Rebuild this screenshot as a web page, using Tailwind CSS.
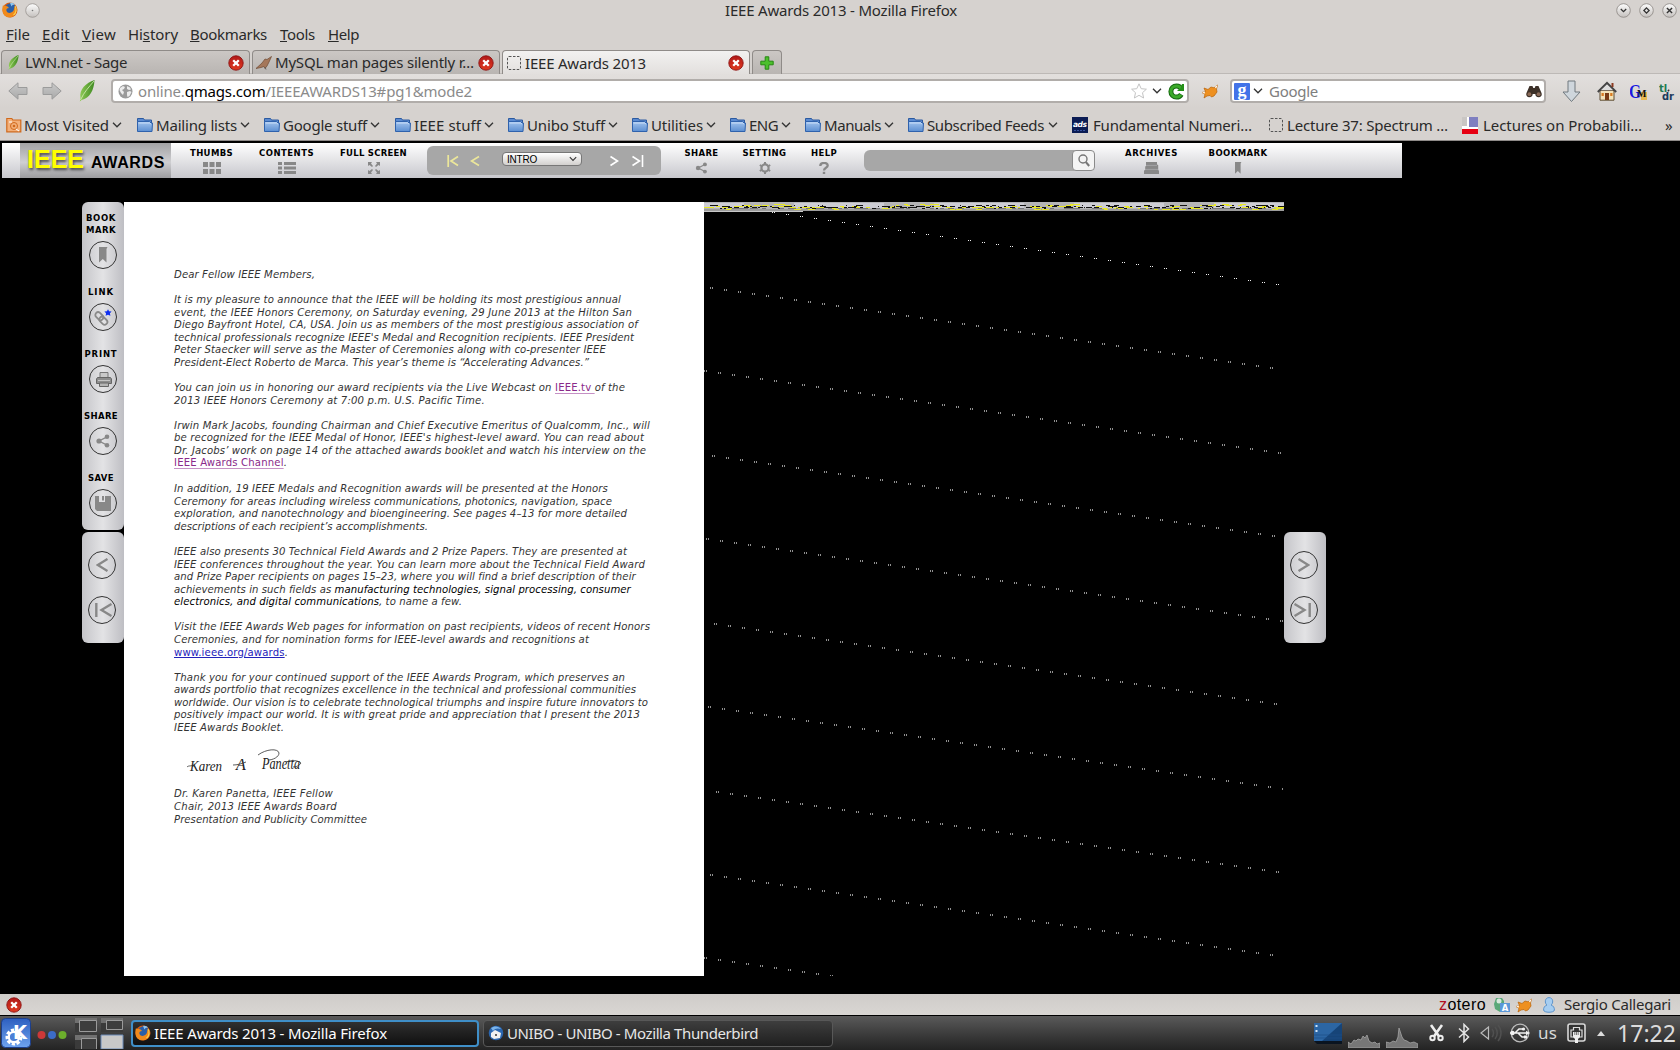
<!DOCTYPE html>
<html lang="en">
<head>
  <meta charset="UTF-8" />
  <meta name="viewport" content="width=device-width, initial-scale=1.0" />
  <title>IEEE Awards 2013 - Mozilla Firefox</title>
  <script src="https://cdn.jsdelivr.net/npm/@tailwindcss/browser@4"></script>
</head>
<body class="w-[1680px] h-[1050px] overflow-hidden flex flex-col bg-[#d6d2cf] text-[#2a2a2a] text-[15px] font-['Noto_Sans',sans-serif] whitespace-nowrap">

  <!-- Shared icons -->
  <svg class="absolute w-0 h-0">
    <defs>
      <linearGradient id="gFolder" x1="0" y1="0" x2="0" y2="1"><stop offset="0" stop-color="#a3c4ee" /><stop offset="1" stop-color="#5c8fd2" /></linearGradient>
      <linearGradient id="gBtn" x1="0" y1="0" x2="0" y2="1"><stop offset="0" stop-color="#fdfdfd" /><stop offset="1" stop-color="#c4c0bd" /></linearGradient>
      <linearGradient id="gRed" x1="0" y1="0" x2="0" y2="1"><stop offset="0" stop-color="#b01818" /><stop offset="1" stop-color="#e03a20" /></linearGradient>
      <linearGradient id="gArrow" x1="0" y1="0" x2="0" y2="1"><stop offset="0" stop-color="#c9c9c9" /><stop offset="1" stop-color="#a9a9a9" /></linearGradient>
      <linearGradient id="gLeaf" x1="0" y1="0" x2="1" y2="0"><stop offset="0" stop-color="#8fca55" /><stop offset="1" stop-color="#3f8a22" /></linearGradient>
      <linearGradient id="gKde" x1="0" y1="0" x2="0" y2="1"><stop offset="0" stop-color="#2d5fc0" /><stop offset="1" stop-color="#6fa4ee" /></linearGradient>
    </defs>
    <symbol id="folder" viewBox="0 0 16 16">
      <path d="M.5 1.500h6l1 1.500h7v3h-14z" fill="#5a8ad0" stroke="#2c5aa0" />
      <path d="M.5 14.500V4.500h12l1.500 1.500h1.500l-.5 8.500z" fill="url(#gFolder)" stroke="#2f62ad" />
      <path d="M1.500 6h11l1.500 1" fill="none" stroke="#d4e4fa" stroke-width=".8" />
    </symbol>
    <symbol id="chev" viewBox="0 0 10 6"><path d="M1 .8l4 4 4-4" fill="none" stroke="#333" stroke-width="1.300" /></symbol>
    <symbol id="close" viewBox="0 0 16 16">
      <circle cx="8" cy="8" r="7.200" fill="url(#gRed)" stroke="#8c1212" stroke-width=".9" />
      <path d="M5.200 5.200l5.600 5.600M10.800 5.200l-5.600 5.600" stroke="#fff" stroke-width="2.300" />
    </symbol>
    <symbol id="leaf" viewBox="0 0 16 22">
      <path d="M15.500 0C7 3 0 9 1.500 18L.8 21.500 2.500 20C11 18 15 10 15.500 0z" fill="url(#gLeaf)" />
      <path d="M15 1C10 7 5 12 1.500 20" stroke="#d9f0bd" stroke-width=".8" fill="none" />
    </symbol>
    <symbol id="firefox" viewBox="0 0 16 16">
      <circle cx="8" cy="8" r="7.500" fill="#d95d10" />
      <circle cx="8.500" cy="6.500" r="5.300" fill="#2a5fa8" />
      <path d="M8 1c2-.6 4 .2 5 1.500-2 0-3 .8-3.500 2z" fill="#8cc4ee" />
      <path d="M1 3c.5 1 1.200 1.300 2.500 1C5 3.800 6 4.500 7 6c-2 0-3 1-2.500 3 .7 2.200 4 2.500 6 .8 1.400-1.200 2-3 1.500-5.300 2.500 2 3 5.500 1 8.300-2.400 3-7.500 3.500-10.500.7C.3 11.200-.2 7 1 3z" fill="#f08a1c" />
      <path d="M13 4c2 3 1.300 7-1.500 9" fill="none" stroke="#fbd04a" stroke-width="1.200" />
    </symbol>
    <symbol id="blank" viewBox="0 0 16 16"><rect x="1.500" y="1.500" width="13" height="13" rx="1.500" fill="none" stroke="#555" stroke-dasharray="2.500 1.500" /></symbol>
    <symbol id="fox" viewBox="0 0 16 16">
      <path d="M15.500 2l-1 4 .5 3-3 4-2.500 1-1.500-1.500-3 .5-3 2 1-3.500L0 9.500l3.500-.8L2 5l4 1.500L9 4l3 .8z" fill="#ee9020" stroke="#b86208" stroke-width=".7" />
      <path d="M0 9.500l3-.8-.5 2zM15.500 2l-2.800 2 1.500 1.500z" fill="#fff" />
    </symbol>
    <symbol id="share" viewBox="0 0 14 14">
      <circle cx="3" cy="7" r="2.600" fill="#888" /><circle cx="11" cy="2.800" r="2.300" fill="#888" /><circle cx="11" cy="11.200" r="2.300" fill="#888" />
      <path d="M11 2.800L3 7l8 4.200" fill="none" stroke="#888" stroke-width="1.300" />
    </symbol>
    <symbol id="ribbon" viewBox="0 0 10 16"><path d="M1 0h8.500l-1 2v13.500L4.800 12 1 15.500z" fill="#888" /></symbol>
  </svg>

  <!-- Title bar -->
  <header class="h-5 flex items-center shrink-0">
    <svg class="w-4 h-4 ml-[2px]"><use href="#firefox" /></svg>
    <svg class="w-[15px] h-[15px] ml-[7px]" viewBox="0 0 15 15"><circle cx="7.500" cy="7.500" r="6.800" fill="url(#gBtn)" stroke="#98938f" stroke-width=".8" /><circle cx="7.500" cy="7.500" r=".8" fill="#777" /></svg>
    <span class="ml-[685px]" data-w="232">IEEE Awards 2013 - Mozilla Firefox</span>
    <div class="ml-auto mr-[3px] flex gap-[8px]">
      <svg class="w-[15px] h-[15px]" viewBox="0 0 15 15"><circle cx="7.500" cy="7.500" r="6.800" fill="url(#gBtn)" stroke="#8a8581" stroke-width=".8" /><path d="M4.800 6l2.700 2.700L10.200 6" fill="none" stroke="#333" stroke-width="1.300" /></svg>
      <svg class="w-[15px] h-[15px]" viewBox="0 0 15 15"><circle cx="7.500" cy="7.500" r="6.800" fill="url(#gBtn)" stroke="#8a8581" stroke-width=".8" /><path d="M7.500 4.900L10.100 7.500 7.500 10.100 4.900 7.500z" fill="none" stroke="#333" stroke-width="1.300" /></svg>
      <svg class="w-[15px] h-[15px]" viewBox="0 0 15 15"><circle cx="7.500" cy="7.500" r="6.800" fill="url(#gBtn)" stroke="#8a8581" stroke-width=".8" /><path d="M4.900 4.900l5.200 5.200M10.100 4.900l-5.200 5.200" stroke="#333" stroke-width="1.400" /></svg>
    </div>
  </header>

  <!-- Menu bar -->
  <nav class="h-7 pl-[6px] flex items-center shrink-0">
    <div class="w-9"><span data-w="24"><u>F</u>ile</span></div>
    <div class="w-10"><span data-w="28"><u>E</u>dit</span></div>
    <div class="w-[46px]"><span data-w="34"><u>V</u>iew</span></div>
    <div class="w-[62px]"><span data-w="50">Hi<u>s</u>tory</span></div>
    <div class="w-[90px]"><span data-w="77"><u>B</u>ookmarks</span></div>
    <div class="w-12"><span data-w="35"><u>T</u>ools</span></div>
    <div><span data-w="31"><u>H</u>elp</span></div>
  </nav>

  <!-- Tabs -->
  <div class="h-[26px] pt-[2px] pl-px flex gap-[2px] shrink-0 border-b border-[#bdb9b6]">
    <div class="w-[249px] h-6 flex items-center rounded-t border border-b-0 border-[#8f8b88] bg-linear-to-b from-[#cbc7c4] to-[#b9b5b2]">
      <svg class="w-[13px] h-[15px] ml-[5px]"><use href="#leaf" /></svg>
      <span class="ml-[5px]" data-w="102">LWN.net - Sage</span>
      <svg class="w-4 h-4 ml-auto mr-[5px]"><use href="#close" /></svg>
    </div>
    <div class="w-[248px] h-6 flex items-center rounded-t border border-b-0 border-[#8f8b88] bg-linear-to-b from-[#cbc7c4] to-[#b9b5b2]">
      <svg class="w-4 h-4 ml-[3px]" viewBox="0 0 16 16"><path d="M0 13.500L6 8l3-4 2 .5 4.500-3L13 7l-2 4-2 2.500-1-2-3 1z" fill="#a5775a" stroke="#6e4a34" stroke-width=".7" /><path d="M9 12l1 2.500" stroke="#555" stroke-width=".8" /></svg>
      <span class="ml-[3px]" data-w="199">MySQL man pages silently r…</span>
      <svg class="w-4 h-4 ml-auto mr-[5px]"><use href="#close" /></svg>
    </div>
    <div class="w-[248px] h-[25px] flex items-center rounded-t border border-b-0 border-[#8f8b88] bg-linear-to-b from-[#f2f1f0] to-[#e2dfdd]">
      <svg class="w-4 h-4 ml-[3px]"><use href="#blank" /></svg>
      <span class="ml-[3px]" data-w="121">IEEE Awards 2013</span>
      <svg class="w-4 h-4 ml-auto mr-[5px]"><use href="#close" /></svg>
    </div>
    <div class="w-[30px] h-6 flex items-center justify-center rounded-t border border-b-0 border-[#8f8b88] bg-linear-to-b from-[#cbc7c4] to-[#b9b5b2]">
      <svg class="w-[14px] h-[14px]" viewBox="0 0 14 14"><path d="M5.200.8h3.600v4.400h4.400v3.600H8.800v4.400H5.200V8.800H.8V5.200h4.400z" fill="#4cc02c" stroke="#268812" /></svg>
    </div>
  </div>

  <!-- Navigation toolbar -->
  <div class="h-[34px] flex items-center shrink-0 bg-linear-to-b from-[#e2dfdd] to-[#d6d2cf]">
    <svg class="w-5 h-[18px] ml-2" viewBox="0 0 20 18"><path d="M.8 9L10 .8v4.700h9v7h-9v4.700z" fill="url(#gArrow)" stroke="#9b9b9b" /></svg>
    <svg class="w-5 h-[18px] ml-[14px]" viewBox="0 0 20 18"><path d="M19.200 9L10 .8v4.700H1v7h9v4.700z" fill="url(#gArrow)" stroke="#9b9b9b" /></svg>
    <svg class="w-4 h-[22px] ml-[17px]"><use href="#leaf" /></svg>
    <div class="w-[1078px] h-6 ml-4 pl-[5px] flex items-center bg-white border-2 border-[#b1adaa] rounded">
      <svg class="w-[15px] h-[15px]" viewBox="0 0 15 15"><circle cx="7.500" cy="7.500" r="7" fill="#9a9a9a" /><path d="M2 4l3-2 2 1-1 2-2 1 2 2-1 3-2-2-1.500-3zM9 2l3 1.500 1 2-2 .5-2-1zM9 8l3-1 1.500 1-2 4-2 1-.5-2z" fill="#ececec" /></svg>
      <span class="ml-[5px] text-[#8b8b8b]" data-w="334">online.<span class="text-black">qmags.com</span>/IEEEAWARDS13#pg1&amp;mode2</span>
      <svg class="w-4 h-4 ml-auto" viewBox="0 0 16 16"><path d="M8 .8l2.200 4.900 5.200.5-3.900 3.500 1.100 5.300L8 12.300 3.400 15l1.100-5.300L.6 6.200l5.200-.5z" fill="#fff" stroke="#c4c4c4" /></svg>
      <svg class="w-[10px] h-[6px] ml-[5px]"><use href="#chev" /></svg>
      <svg class="w-[17px] h-[17px] ml-[6px] mr-[2px]" viewBox="0 0 17 17"><circle cx="8.500" cy="8.500" r="5.600" fill="none" stroke="#176b12" stroke-width="5" stroke-dasharray="29 7" stroke-dashoffset="-3" /><circle cx="8.500" cy="8.500" r="5.600" fill="none" stroke="#3aaa28" stroke-width="3" stroke-dasharray="28 7.200" stroke-dashoffset="-3.500" /><path d="M9.500 8V7l3-1.500L14 1h2v7z" fill="#249018" /></svg>
    </div>
    <svg class="w-4 h-4 ml-[13px]"><use href="#fox" /></svg>
    <div class="w-[316px] h-6 ml-3 pl-[2px] flex items-center bg-white border-2 border-[#b1adaa] rounded">
      <svg class="w-4 h-[17px]" viewBox="0 0 16 17"><rect width="16" height="17" rx="1" fill="#4273e8" /><text x="8" y="12.500" text-anchor="middle" font-family="Liberation Serif" font-weight="bold" font-size="18" fill="#fff">g</text></svg>
      <svg class="w-[10px] h-[6px] ml-[3px]"><use href="#chev" /></svg>
      <span class="ml-[6px] text-[#7e7e7e]" data-w="49">Google</span>
      <svg class="w-4 h-[13px] ml-auto mr-[2px]" viewBox="0 0 16 13"><path d="M3.500 1h3l.8 2h1.400l.8-2h3l3 7c.8 2-.3 4.300-2.700 4.300S9.300 10.500 9.300 9H6.700c0 1.500-1 3.300-3.500 3.300S-.3 10 .5 8z" fill="#3c3028" /><circle cx="3.400" cy="9.200" r="1.900" fill="#8a6a58" /><circle cx="12.600" cy="9.200" r="1.900" fill="#8a6a58" /></svg>
    </div>
    <svg class="w-[19px] h-[23px] ml-[16px]" viewBox="0 0 19 23"><path d="M6 1h7v11h5l-8.500 9.500L1 12h5z" fill="#cfd6dc" stroke="#70787e" /></svg>
    <svg class="w-5 h-5 ml-4" viewBox="0 0 20 20"><path d="M3 9.500h14v9.700H3z" fill="#f3e3b8" stroke="#5c4a30" /><path d="M.8 11L10 2l9.200 9" fill="none" stroke="#444" stroke-width="2" /><path d="M10 3.500L4 9.300h12z" fill="#ddd" /><path d="M14.500 2h2v4h-2z" fill="#8c3a20" /><path d="M8 12h4v7H8z" fill="#7a3c14" /><path d="M4.500 12h2.300v3H4.500zM13.200 12h2.300v3h-2.300z" fill="#d87a20" /></svg>
    <svg class="w-[17px] h-[17px] ml-[13px]" viewBox="0 0 17 17"><path d="M11 9h6v8h-6z" fill="#e8b850" /><text x="-1" y="15" font-family="Liberation Serif" font-weight="bold" font-size="19" fill="#1a1ae0" textLength="12" lengthAdjust="spacingAndGlyphs">G</text><text x="7" y="13.500" font-family="Liberation Serif" font-weight="bold" font-size="10" fill="#111">M</text></svg>
    <svg class="w-4 h-[17px] ml-[12px]" viewBox="0 0 16 17"><text x="0" y="8.500" font-family="DejaVu Sans" font-weight="bold" font-size="10" fill="#1f7a52">tl</text><path d="M9 7l1 1" stroke="#333" stroke-width="2" /><text x="3" y="16.500" font-family="DejaVu Sans" font-weight="bold" font-size="10" fill="#1a3a5c" textLength="12" lengthAdjust="spacingAndGlyphs">dr</text></svg>
  </div>

  <!-- Bookmarks toolbar -->
  <div class="h-[33px] pl-[6px] pt-[2px] flex items-center shrink-0 border-b border-[#8e8a88]">
    <div class="w-[131px] flex items-center">
      <svg class="w-4 h-4" viewBox="0 0 16 16"><path d="M.8 14.800V1.500h5l1 1.500h8v11.800z" fill="#f3b07a" stroke="#d0691c" stroke-width="1.200" /><circle cx="8" cy="9" r="3.500" fill="none" stroke="#d0691c" /><circle cx="8" cy="9" r="1.300" fill="#d0691c" /><path d="M3 5h3M10 12l3 2" stroke="#fff" /></svg>
      <span class="ml-[2px] mr-[3px]" data-w="85">Most Visited</span><svg class="w-[10px] h-[6px]"><use href="#chev" /></svg>
    </div>
    <div class="w-[127px] flex items-center"><svg class="w-4 h-4"><use href="#folder" /></svg><span class="ml-[3px] mr-[3px]" data-w="81">Mailing lists</span><svg class="w-[10px] h-[6px]"><use href="#chev" /></svg></div>
    <div class="w-[131px] flex items-center"><svg class="w-4 h-4"><use href="#folder" /></svg><span class="ml-[3px] mr-[3px]" data-w="84">Google stuff</span><svg class="w-[10px] h-[6px]"><use href="#chev" /></svg></div>
    <div class="w-[113px] flex items-center"><svg class="w-4 h-4"><use href="#folder" /></svg><span class="ml-[3px] mr-[3px]" data-w="67">IEEE stuff</span><svg class="w-[10px] h-[6px]"><use href="#chev" /></svg></div>
    <div class="w-[124px] flex items-center"><svg class="w-4 h-4"><use href="#folder" /></svg><span class="ml-[3px] mr-[3px]" data-w="78">Unibo Stuff</span><svg class="w-[10px] h-[6px]"><use href="#chev" /></svg></div>
    <div class="w-[98px] flex items-center"><svg class="w-4 h-4"><use href="#folder" /></svg><span class="ml-[3px] mr-[3px]" data-w="52">Utilities</span><svg class="w-[10px] h-[6px]"><use href="#chev" /></svg></div>
    <div class="w-[75px] flex items-center"><svg class="w-4 h-4"><use href="#folder" /></svg><span class="ml-[3px] mr-[3px]" data-w="29">ENG</span><svg class="w-[10px] h-[6px]"><use href="#chev" /></svg></div>
    <div class="w-[103px] flex items-center"><svg class="w-4 h-4"><use href="#folder" /></svg><span class="ml-[3px] mr-[3px]" data-w="57">Manuals</span><svg class="w-[10px] h-[6px]"><use href="#chev" /></svg></div>
    <div class="w-[164px] flex items-center"><svg class="w-4 h-4"><use href="#folder" /></svg><span class="ml-[3px] mr-[4px]" data-w="117">Subscribed Feeds</span><svg class="w-[10px] h-[6px]"><use href="#chev" /></svg></div>
    <div class="w-[196px] flex items-center">
      <svg class="w-4 h-4" viewBox="0 0 16 16"><rect width="16" height="16" fill="#0b1c54" /><text x="8" y="10" text-anchor="middle" font-family="DejaVu Sans" font-style="italic" font-weight="bold" font-size="7.500" fill="#fff" textLength="14">ads</text><path d="M2 13.500h12" stroke="#3a55a0" stroke-dasharray="2 1" /></svg>
      <span class="ml-[5px]" data-w="159">Fundamental Numeri…</span>
    </div>
    <div class="w-[194px] flex items-center"><svg class="w-4 h-4"><use href="#blank" /></svg><span class="ml-[3px]" data-w="161">Lecture 37: Spectrum …</span></div>
    <div class="w-[203px] flex items-center">
      <svg class="w-4 h-[17px]" viewBox="0 0 16 17"><path d="M0 0h16v17H0z" fill="#fff" /><path d="M0 0h5v9H0z" fill="#c9c6c4" /><path d="M7 0h9v10H7z" fill="#7f7fc0" /><path d="M0 12h16v5H0z" fill="#e60012" /></svg>
      <span class="ml-[5px]" data-w="159">Lectures on Probabili…</span>
    </div>
    <span>»</span>
  </div>

  <!-- Page viewer -->
  <main class="h-[853px] shrink-0 bg-black">
    <div class="pt-[2px] pl-[2px]">
      <div class="w-[1400px] h-[35px] flex bg-linear-to-b from-white to-[#c8c8cd] text-black text-[8.500px] font-bold font-['DejaVu_Sans',sans-serif]">
        <div class="w-[151px] h-[35px] ml-[18px] pl-[7px] flex items-baseline leading-[33px] bg-linear-to-b from-[#a2a2a4] via-[#cfcfd2] via-55% to-[#9c9c9f] font-['Liberation_Sans',sans-serif]">
          <span class="text-[25px] text-[#ffff00] [text-shadow:1px_2px_3px_#444]" data-w="57">IEEE</span>
          <span class="ml-[7px] text-[16px]" data-w="74">AWARDS</span>
        </div>
        <div class="w-[81px] pt-[5px] flex flex-col items-center gap-[4px]">
          <span class="leading-[10px]" data-w="43">THUMBS</span>
          <svg class="w-[18px] h-3" viewBox="0 0 18 12"><path d="M0 0h5v5H0zM6.500 0h5v5h-5zM13 0h5v5h-5zM0 7h5v5H0zM6.500 7h5v5h-5zM13 7h5v5h-5z" fill="#888" /></svg>
        </div>
        <div class="w-[69px] pt-[5px] flex flex-col items-center gap-[4px]">
          <span class="leading-[10px]" data-w="55">CONTENTS</span>
          <svg class="w-[18px] h-3" viewBox="0 0 18 12"><path d="M0 0h4v3H0zM6 0h12v3H6zM0 4.500h4v3H0zM6 4.500h12v3H6zM0 9h4v3H0zM6 9h12v3H6z" fill="#888" /></svg>
        </div>
        <div class="w-[105px] pt-[5px] flex flex-col items-center gap-[4px]">
          <span class="leading-[10px]" data-w="67">FULL SCREEN</span>
          <svg class="w-3 h-3" viewBox="0 0 12 12"><path d="M0 0h4L3 1.500 5 4 4 5 1.500 3 0 4zM12 0v4L10.500 3 8 5 7 4l2-2.500L8 0zM0 12V8l1.500 1L4 7l1 1-2 2.500L4 12zM12 12H8l1-1.500L7 8l1-1 2.500 2L12 8z" fill="#888" /></svg>
        </div>
        <div class="w-[234px] h-[29px] mt-[3px] ml-[1px] pl-5 flex items-center bg-[#a7a7a7] rounded-md">
          <svg class="w-3 h-3" viewBox="0 0 12 12"><path d="M1.200 0v12M11 1.500L4 6l7 4.500" fill="none" stroke="#ece79a" stroke-width="1.700" /></svg>
          <svg class="w-[10px] h-3 ml-[11px]" viewBox="0 0 10 12"><path d="M9 1.500L1.500 6 9 10.500" fill="none" stroke="#ece79a" stroke-width="1.700" /></svg>
          <div class="w-20 h-[14px] ml-[22px] mb-[3px] pl-1 pr-1 flex items-center justify-between rounded border border-[#777] bg-linear-to-b from-white to-[#d2d0ce] font-normal text-[10px] font-['Liberation_Sans',sans-serif]">
            <span data-w="30">INTRO</span>
            <svg class="w-2 h-[6px]"><use href="#chev" /></svg>
          </div>
          <svg class="w-[9px] h-3 ml-[28px]" viewBox="0 0 9 12"><path d="M.5 1.500L7.500 6l-7 4.500" fill="none" stroke="#fff" stroke-width="1.700" /></svg>
          <svg class="w-3 h-3 ml-[13px]" viewBox="0 0 12 12"><path d="M.5 1.500L7.500 6l-7 4.500M10.500 0v12" fill="none" stroke="#fff" stroke-width="1.600" /></svg>
        </div>
        <div class="w-[81px] pt-[5px] flex flex-col items-center gap-[4px]">
          <span class="leading-[10px]" data-w="34">SHARE</span>
          <svg class="w-[13px] h-3"><use href="#share" /></svg>
        </div>
        <div class="w-[45px] pt-[5px] flex flex-col items-center gap-[4px]">
          <span class="leading-[10px]" data-w="44">SETTING</span>
          <svg class="w-3 h-3" viewBox="0 0 12 12"><circle cx="6" cy="6" r="3.600" fill="none" stroke="#888" stroke-width="2.200" /><path d="M6 0v2M6 10v2M.8 3l1.700 1M9.500 8l1.700 1M.8 9l1.700-1M9.500 4l1.700-1" stroke="#888" stroke-width="2" /></svg>
        </div>
        <div class="w-[74px] pt-[5px] flex flex-col items-center gap-[4px]">
          <span class="leading-[10px]" data-w="26">HELP</span>
          <svg class="w-[10px] h-3" viewBox="0 0 10 12"><path d="M1.300 4C1.300 0 8.700 0 8.700 3.500 8.700 6 5 5.500 5 8.500" fill="none" stroke="#888" stroke-width="2.300" /><path d="M3.800 9.800h2.400V12H3.800z" fill="#888" /></svg>
        </div>
        <div class="w-[231px] h-[21px] mt-[7px] ml-[3px] flex justify-end bg-[#a7a7a7] rounded-md">
          <div class="w-[23px] flex items-center justify-center rounded border border-[#8a8a8a] bg-[#f4f4f4]">
            <svg class="w-3 h-[13px]" viewBox="0 0 12 13"><circle cx="5" cy="5" r="4" fill="none" stroke="#777" stroke-width="1.400" /><path d="M7.800 8l3.400 4" stroke="#777" stroke-width="2" /></svg>
          </div>
        </div>
        <div class="w-[113px] pt-[5px] flex flex-col items-center gap-[4px]">
          <span class="leading-[10px]" data-w="53">ARCHIVES</span>
          <svg class="w-[15px] h-3" viewBox="0 0 15 12"><path d="M2 0h11v2.500l1.200.5v5l.8.700V12H0V8.500L1.200 8V4.500L2 4z" fill="#888" /><path d="M2 3.400h11M1 7.400h13" stroke="#b5b5b8" stroke-width=".6" /></svg>
        </div>
        <div class="w-[60px] pt-[5px] flex flex-col items-center gap-[4px]">
          <span class="leading-[10px]" data-w="59">BOOKMARK</span>
          <svg class="w-2 h-3"><use href="#ribbon" /></svg>
        </div>
      </div>
    </div>

    <div class="pt-6 pl-[82px] flex">
      <div class="w-[42px] flex flex-col gap-[2px] text-black text-[8.500px] leading-[12px] font-bold font-['DejaVu_Sans',sans-serif]">
        <div class="h-[328px] pt-[10px] flex flex-col items-center rounded-md bg-linear-to-r from-[#c5c5c9] via-[#e3e3e5] to-[#bebec3]">
          <span class="mr-1" data-w="30">BOOK</span>
          <span class="mr-1" data-w="30">MARK</span>
          <div class="w-7 h-7 mt-[5px] flex items-center justify-center rounded-full border border-[#333]"><svg class="w-[10px] h-4"><use href="#ribbon" /></svg></div>
          <span class="mt-[17px] mr-1" data-w="26">LINK</span>
          <div class="w-7 h-7 mt-[5px] flex items-center justify-center rounded-full border border-[#333]">
            <svg class="w-[18px] h-[17px]" viewBox="0 0 18 17"><rect x="1" y="4.500" width="9" height="5.500" rx="2.700" transform="rotate(45 5.500 7)" fill="none" stroke="#8a8a8a" stroke-width="1.800" /><rect x="5" y="9" width="9" height="5.500" rx="2.700" transform="rotate(45 9.500 11.500)" fill="none" stroke="#8a8a8a" stroke-width="1.800" /><path d="M14 .2l1.100 2.100 2.500.2-1.700 1.800.5 2.500L14 5.700l-2.400 1.100.5-2.500-1.700-1.800 2.500-.2z" fill="#1030f0" /></svg>
          </div>
          <span class="mt-[17px] mr-1" data-w="33">PRINT</span>
          <div class="w-7 h-7 mt-[5px] flex items-center justify-center rounded-full border border-[#333]">
            <svg class="w-4 h-[15px] ml-px" viewBox="0 0 16 15"><path d="M4 .5h8v6H4z" fill="#c9c9c9" stroke="#777" /><path d="M1.500 5.500h13l1 1.500v4.500H.5V7z" fill="#8d8d8d" stroke="#666" /><path d="M3.500 11h9v3.500h-9z" fill="#b5b5b5" stroke="#666" /><path d="M2 8.500h12" stroke="#c5c5c5" /></svg>
          </div>
          <span class="mt-[17px] mr-1" data-w="34">SHARE</span>
          <div class="w-7 h-7 mt-[5px] flex items-center justify-center rounded-full border border-[#333]"><svg class="w-[14px] h-[14px]"><use href="#share" /></svg></div>
          <span class="mt-[17px] mr-1" data-w="26">SAVE</span>
          <div class="w-7 h-7 mt-[5px] flex items-center justify-center rounded-full border border-[#333]">
            <svg class="w-4 h-[15px]" viewBox="0 0 16 15"><path d="M0 0h4v6h6V0h6v15H2l-2-2z" fill="#888" /><path d="M7 0h2v4.500H7z" fill="#888" /></svg>
          </div>
        </div>
        <div class="h-[111px] pt-[19px] pr-[2px] flex flex-col items-center rounded-md bg-linear-to-r from-[#c5c5c9] via-[#e3e3e5] to-[#bebec3]">
          <div class="w-7 h-7 flex items-center justify-center rounded-full border border-[#333]"><svg class="w-3 h-[14px]" viewBox="0 0 12 14"><path d="M11.500 1L1.800 7l9.700 6" fill="none" stroke="#888" stroke-width="2.400" /></svg></div>
          <div class="w-7 h-7 mt-[17px] flex items-center justify-center rounded-full border border-[#333]"><svg class="w-[17px] h-[14px] ml-[3px]" viewBox="0 0 17 14"><path d="M1.300 0v14M16.500 1L6.500 7l10 6" fill="none" stroke="#888" stroke-width="2.400" /></svg></div>
        </div>
      </div>

      <article class="w-[580px] h-[774px] pt-[67px] pl-[50px] flex flex-col gap-[12.500px] bg-white text-[#333] text-[10.100px] leading-[12.570px] italic font-['DejaVu_Sans',sans-serif]">
        <p><span data-w="141">Dear Fellow IEEE Members,</span></p>
        <p>
          <span data-w="447">It is my pleasure to announce that the IEEE will be holding its most prestigious annual</span><br />
          <span data-w="458">event, the IEEE Honors Ceremony, on Saturday evening, 29 June 2013 at the Hilton San</span><br />
          <span data-w="464">Diego Bayfront Hotel, CA, USA. Join us as members of the most prestigious association of</span><br />
          <span data-w="460">technical professionals recognize IEEE's Medal and Recognition recipients. IEEE President</span><br />
          <span data-w="432">Peter Staecker will serve as the Master of Ceremonies along with co-presenter IEEE</span><br />
          <span data-w="415">President-Elect Roberto de Marca. This year’s theme is “Accelerating Advances.”</span>
        </p>
        <p>
          <span data-w="451">You can join us in honoring our award recipients via the Live Webcast on <a class="not-italic text-[#8a2a8a] underline decoration-[#c590c5] underline-offset-2">IEEE.tv </a>of the</span><br />
          <span data-w="311">2013 IEEE Honors Ceremony at 7:00 p.m. U.S. Pacific Time.</span>
        </p>
        <p>
          <span data-w="476">Irwin Mark Jacobs, founding Chairman and Chief Executive Emeritus of Qualcomm, Inc., will</span><br />
          <span data-w="470">be recognized for the IEEE Medal of Honor, IEEE's highest-level award. You can read about</span><br />
          <span data-w="472">Dr. Jacobs’ work on page 14 of the attached awards booklet and watch his interview on the</span><br />
          <span data-w="113"><a class="not-italic text-[#8a2a8a] underline decoration-[#c590c5] underline-offset-2">IEEE Awards Channel</a>.</span>
        </p>
        <p class="mt-[1px]">
          <span data-w="434">In addition, 19 IEEE Medals and Recognition awards will be presented at the Honors</span><br />
          <span data-w="438">Ceremony for areas including wireless communications, photonics, navigation, space</span><br />
          <span data-w="453">exploration, and nanotechnology and bioengineering. See pages 4–13 for more detailed</span><br />
          <span data-w="254">descriptions of each recipient’s accomplishments.</span>
        </p>
        <p>
          <span data-w="453">IEEE also presents 30 Technical Field Awards and 2 Prize Papers. They are presented at</span><br />
          <span data-w="471">IEEE conferences throughout the year. You can learn more about the Technical Field Award</span><br />
          <span data-w="462">and Prize Paper recipients on pages 15–23, where you will find a brief description of their</span><br />
          <span data-w="457">achievements in such fields as <span class="text-black">manufacturing technologies, signal processing, consumer</span></span><br />
          <span data-w="288"><span class="text-black">electronics, and digital communications</span>, to name a few.</span>
        </p>
        <p>
          <span data-w="476">Visit the IEEE Awards Web pages for information on past recipients, videos of recent Honors</span><br />
          <span data-w="415">Ceremonies, and for nomination forms for IEEE-level awards and recognitions at</span><br />
          <span data-w="114"><a class="not-italic text-[#2222bb] underline">www.ieee.org/awards</a>.</span>
        </p>
        <p>
          <span data-w="451">Thank you for your continued support of the IEEE Awards Program, which preserves an</span><br />
          <span data-w="462">awards portfolio that recognizes excellence in the technical and professional communities</span><br />
          <span data-w="474">worldwide. Our vision is to celebrate technological triumphs and inspire future innovators to</span><br />
          <span data-w="466">positively impact our world. It is with great pride and appreciation that I present the 2013</span><br />
          <span data-w="110">IEEE Awards Booklet.</span>
        </p>
        <!-- Signature -->
        <svg class="w-[118px] h-[26px] ml-3 mt-[2px]" viewBox="0 0 118 26">
          <g font-family="Liberation Serif" font-style="italic" fill="#222">
            <text x="4" y="22" font-size="15" textLength="32" lengthAdjust="spacingAndGlyphs">Karen</text>
            <text x="50" y="21" font-size="16">A</text>
            <text x="76" y="20" font-size="16" textLength="38" lengthAdjust="spacingAndGlyphs">Panetta</text>
          </g>
          <path d="M1 18c2-2 4 0 8-3M47 16c4 0 8-1 13-3M72 6C80 0 92-1 93 4c0 4-6 7-11 7M100 13c6-2 11-2 15 1-2 3-5 4-8 4" fill="none" stroke="#333" stroke-width=".8" />
        </svg>
        <p class="mt-[1px]">
          <span data-w="159">Dr. Karen Panetta, IEEE Fellow</span><br />
          <span data-w="163">Chair, 2013 IEEE Awards Board</span><br />
          <span data-w="193">Presentation and Publicity Committee</span>
        </p>
      </article>

      <canvas id="nextPage" class="w-[580px] h-[774px]" width="580" height="774"></canvas>

      <div class="w-[42px] h-[111px] mt-[330px] pt-[19px] pr-[3px] flex flex-col items-center rounded-md bg-linear-to-r from-[#c5c5c9] via-[#e3e3e5] to-[#bebec3]">
        <div class="w-7 h-7 shrink-0 flex items-center justify-center rounded-full border border-[#333]"><svg class="w-3 h-[14px]" viewBox="0 0 12 14"><path d="M.5 1l9.700 6L.5 13" fill="none" stroke="#888" stroke-width="2.400" /></svg></div>
        <div class="w-7 h-7 mt-[17px] shrink-0 flex items-center justify-center rounded-full border border-[#333]"><svg class="w-[17px] h-[14px] mr-[2px]" viewBox="0 0 17 14"><path d="M.5 1l10 6-10 6M15.700 0v14" fill="none" stroke="#888" stroke-width="2.400" /></svg></div>
      </div>
    </div>
  </main>

  <!-- Add-on bar -->
  <div class="h-[22px] pl-[6px] flex items-center shrink-0 bg-linear-to-b from-[#cfccc9] to-[#d9d6d3] border-b border-black">
    <svg class="w-4 h-4"><use href="#close" /></svg>
    <span class="ml-[1417px] text-black text-[16px] font-['Liberation_Sans',sans-serif]" data-w="47"><span class="text-[#b01020]">z</span>otero</span>
    <svg class="w-4 h-4 ml-2" viewBox="0 0 16 16"><path d="M2 1h6l2 3v7l-4 4-5-3-1-5z" fill="#5aa878" /><circle cx="5" cy="4" r="2.500" fill="#d8e8dc" /><path d="M6 6h10v9H6z" fill="#5c98d8" /><text x="11" y="13.500" text-anchor="middle" font-family="DejaVu Sans" font-weight="bold" font-size="8.500" fill="#fff">A</text></svg>
    <svg class="w-4 h-4 ml-[6px]"><use href="#fox" /></svg>
    <svg class="w-3 h-4 ml-[11px]" viewBox="0 0 12 16"><path d="M6 .6c4.500 0 4.500 6 2 7.400 2.500 1 3.500 2.500 3.400 5 0 3-10.800 3-10.800 0C.5 10.500 1.500 9 4 8 1.500 6.600 1.500.6 6 .6z" fill="#a6cdf0" stroke="#5c94cc" /></svg>
    <span class="ml-[9px]" data-w="107">Sergio Callegari</span>
  </div>

  <!-- Taskbar -->
  <footer class="h-[34px] flex items-center shrink-0 bg-linear-to-b from-[#5a5a5a] to-[#232323] text-white">
    <svg class="w-[30px] h-[30px] ml-px shrink-0" viewBox="0 0 30 30">
      <rect x=".5" y=".5" width="29" height="29" rx="4" fill="url(#gKde)" stroke="#1c3f8c" />
      <circle cx="13" cy="19" r="6.500" fill="none" stroke="#fff" stroke-width="4" stroke-dasharray="3 1.500" />
      <circle cx="13" cy="19" r="5.200" fill="#4c7fd6" stroke="#fff" stroke-width="2.200" />
      <text x="12" y="21" font-family="DejaVu Sans" font-weight="bold" font-size="19" fill="#fff" textLength="14" lengthAdjust="spacingAndGlyphs">K</text>
    </svg>
    <svg class="w-[30px] h-[10px] ml-[6px] mt-1 shrink-0" viewBox="0 0 30 10"><circle cx="4.500" cy="5" r="4" fill="#cc3838" /><circle cx="15" cy="5" r="4" fill="#3c6cc8" /><circle cx="25.500" cy="5" r="4" fill="#6cae2c" /></svg>
    <svg class="w-[49px] h-[32px] ml-[8px] shrink-0" viewBox="0 0 49 32">
      <path d="M0 1h22v14H0zM26 1h22v14H26zM0 18h22v14H0z" fill="#3a3a3a" />
      <path d="M0 1h22v5H0zM26 1h22v5H26zM0 18h22v5H0z" fill="#707070" />
      <path d="M4.500 3.500h17v11h-17zM31.500 3.500h16v9h-16zM6.500 21.500h15v11h-15z" fill="#3d3d3d" stroke="#9a9a9a" />
      <path d="M26 18h22v14H26z" fill="#c8c8c8" stroke="#6a8ab8" />
    </svg>
    <div class="w-[348px] h-[27px] ml-[7px] pl-[2px] flex items-center shrink-0 rounded border-2 border-[#3f8fc8] bg-linear-to-b from-[#303030] to-[#101010]">
      <svg class="w-4 h-4"><use href="#firefox" /></svg>
      <span class="ml-[3px]" data-w="233">IEEE Awards 2013 - Mozilla Firefox</span>
    </div>
    <div class="w-[350px] h-[27px] ml-[4px] pl-[4px] flex items-center shrink-0 rounded border border-[#585858] bg-linear-to-b from-[#3e3e3e] to-[#1f1f1f] text-[#e6e6e6]">
      <svg class="w-4 h-4" viewBox="0 0 16 16"><circle cx="8" cy="8" r="7.300" fill="#2a66b0" /><path d="M3 8l4-3 6 3-1 5-6 1-3-2z" fill="#f0f0f0" /><path d="M3 3c3-2.500 8-2 10 1-3-1-6-1-8 2z" fill="#7cb4ea" /><circle cx="8" cy="10" r="1" fill="#333" /></svg>
      <span class="ml-[3px]" data-w="251">UNIBO - UNIBO - Mozilla Thunderbird</span>
    </div>
    <div class="ml-[481px] flex items-center shrink-0">
      <svg class="w-[28px] h-[21px]" viewBox="0 0 28 21"><path d="M0 0h28v18H0z" fill="#2c66a4" /><path d="M28 0v18H8z" fill="#164478" /><path d="M0 18h28v3H3z" fill="#0a1420" /><path d="M1.500 3h2M1.500 8h2" stroke="#cfe4f8" stroke-width="2" /><path d="M0 12h28M0 15h28" stroke="#1d4e86" stroke-width=".7" /></svg>
      <svg class="w-8 h-[30px] ml-[6px]" viewBox="0 0 32 30"><path d="M0 30v-6l3 2 3-4 2 1 2-2 3 1 2-4 2 2 2-3 2 6 3 2 3-1 2 2 3-1v5z" fill="#777" stroke="#a5a5a5" stroke-width=".8" /></svg>
      <svg class="w-8 h-[30px] ml-[6px]" viewBox="0 0 32 30"><path d="M0 30v-6l4 1 3-2 3 1 2-5 1-9 3 9 2 3 3 1 3 2 4-1 4 2v4z" fill="#777" stroke="#a5a5a5" stroke-width=".8" /></svg>
      <svg class="w-[15px] h-[18px] ml-[11px]" viewBox="0 0 15 18"><path d="M2 1l8.500 12M13 1L4.500 13" stroke="#eee" stroke-width="2.600" /><circle cx="3.500" cy="14" r="2.200" fill="none" stroke="#eee" stroke-width="2" /><circle cx="11.500" cy="14" r="2.200" fill="none" stroke="#eee" stroke-width="2" /></svg>
      <svg class="w-3 h-[20px] ml-[14px]" viewBox="0 0 12 20"><path d="M1 5.500l9.500 8.500L6 18.500v-17L10.500 6 1 14.500" fill="none" stroke="#e4e4e4" stroke-width="1.500" /></svg>
      <svg class="w-[23px] h-[20px] ml-[10px]" viewBox="0 0 23 20"><path d="M8.500 4v12L1 10z" fill="none" stroke="#bbb" stroke-width="1.200" /><path d="M12 6c2 2 2 6 0 8M15 4c3 3.500 3 8.500 0 12M18 2c4 4.500 4 11.500 0 16" fill="none" stroke="#505050" stroke-width="1.500" /></svg>
      <svg class="w-5 h-5 ml-[7px]" viewBox="0 0 20 20"><circle cx="10" cy="10" r="8.800" fill="none" stroke="#bcbcbc" stroke-width="1.300" /><path d="M0 10h18M5 10l4-4h4M8 10l4 4h3" fill="none" stroke="#f2f2f2" stroke-width="1.500" /><circle cx="2.500" cy="10" r="2.200" fill="#f2f2f2" /><circle cx="13.500" cy="6" r="1.600" fill="#f2f2f2" /><path d="M14 12.500h3v3h-3zM16 7.800l4 2.200-4 2.200z" fill="#f2f2f2" /></svg>
      <span class="ml-2 text-[17px] text-[#d8d8d8]" data-w="19">us</span>
      <svg class="w-[19px] h-[20px] ml-[10px]" viewBox="0 0 19 20"><rect x="1" y="1" width="17" height="17" rx="2" fill="#333" stroke="#d8d8d8" stroke-width="1.600" /><path d="M4 14V7h2.500V4.500h6V7H15v7z" fill="none" stroke="#ddd" stroke-width="1.200" /><path d="M6 9h7v5l-2 2v4H8v-4l-2-2z" fill="#eee" /><path d="M7.800 9v3M9.500 9v3M11.200 9v3" stroke="#444" stroke-width=".7" /></svg>
      <svg class="w-2 h-[5px] ml-[11px]" viewBox="0 0 8 5"><path d="M4 0l4 5H0z" fill="#ddd" /></svg>
      <span class="ml-3 text-[23px] leading-8 text-[#dcdcdc]" data-w="59">17:22</span>
    </div>
  </footer>

  <script>
    // spread each label over the width given in data-w
    function fitLabels() {
      document.querySelectorAll('[data-w]').forEach(function (el) {
        el.style.letterSpacing = '0px';
        var extra = Number(el.dataset.w) - el.getBoundingClientRect().width;
        el.style.letterSpacing = (extra / el.textContent.length) + 'px';
      });
    }
    fitLabels();
    window.addEventListener('load', fitLabels);
    document.fonts.ready.then(fitLabels);
    // the page width changes once the stylesheet is in
    new ResizeObserver(fitLabels).observe(document.body);

    // garbled page: a noisy strip on top, then dots that wrap around the page width
    var ctx = document.getElementById('nextPage').getContext('2d');
    var seed = 7;
    function rnd() {
      seed = (seed * 16807) % 2147483647;
      return seed / 2147483647;
    }

    ctx.fillStyle = '#b4b4b6';
    ctx.fillRect(0, 0, 580, 9);
    ctx.fillStyle = '#cdcdd4';
    for (var i = 0; i < 5; i++) ctx.fillRect(i * 140 - 50, 1, 90, 5);
    ctx.fillStyle = '#9c9c9c';
    ctx.fillRect(0, 7, 580, 2);
    ctx.fillStyle = '#c8c8c8';
    ctx.fillRect(0, 9, 99, 1);
    for (var x = 0; x < 578; x += 2) {
      var phase = ((x + 40) % 152) / 152;
      var y = 3 + Math.round(rnd() * 3);
      if (rnd() < 0.75) {
        ctx.fillStyle = '#111';
        ctx.fillRect(x, y, 1 + Math.round(rnd() * 5), 1);
      }
      if (rnd() < 0.45) {
        ctx.fillStyle = '#e8e824';
        ctx.fillRect(x, phase > 0.5 && phase < 0.8 ? 2 + Math.round(rnd() * 2) : 4 + Math.round(rnd() * 3), 2 + Math.round(rnd() * 6), 1);
      }
      if (rnd() < 0.25) {
        ctx.fillStyle = '#77777a';
        ctx.fillRect(x, 6, 4, 1);
      }
    }

    var dx = 69, dy = 10;
    while (dy < 774) {
      ctx.fillStyle = dy < 84 ? '#f0f0f0' : '#909090';
      ctx.fillRect(dx - 1, dy, 1, dy < 84 ? 1 : 2);
      ctx.fillRect(dx + 1, dy, 1, dy < 84 ? 1 : 2);
      dx += 14;
      dy += 2;
      if (dx >= 580) {
        dx -= 580;
        dy += 1;
      }
    }
  </script>
</body>
</html>
